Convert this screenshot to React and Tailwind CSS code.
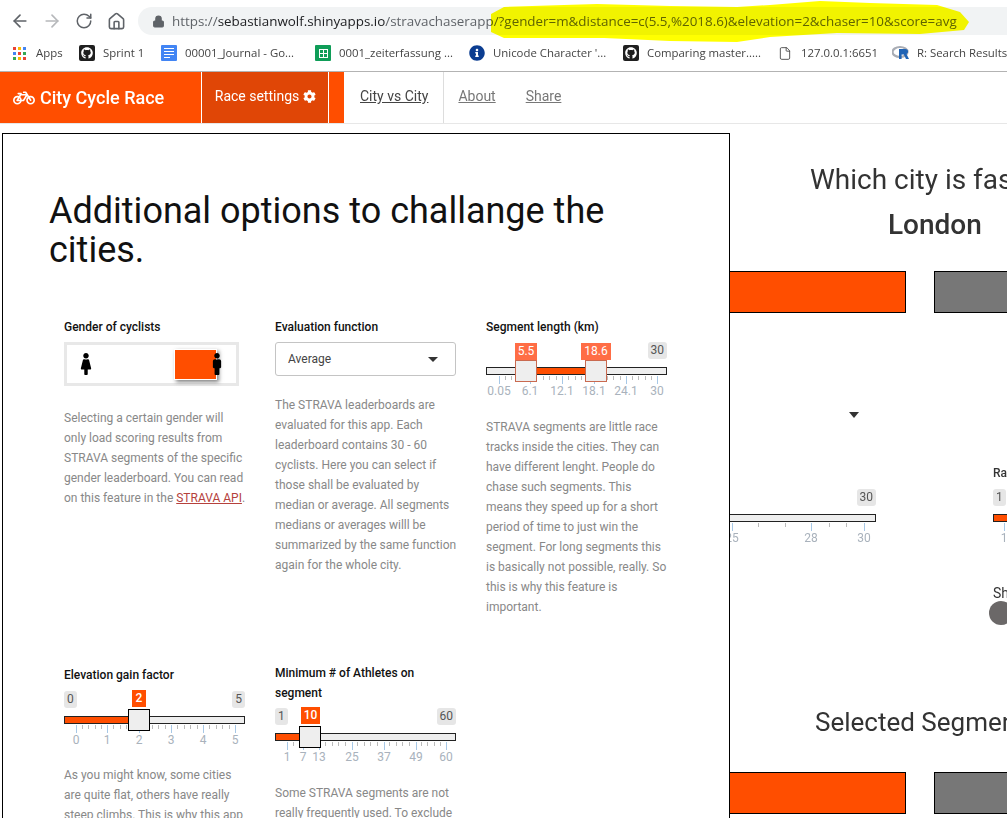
import React from 'react';
import { ArrowLeft, ArrowRight, RotateCw, Home, Lock, File } from 'lucide-react';
import { FaBicycle, FaCog, FaFemale, FaMale, FaInfoCircle, FaGithub } from 'react-icons/fa';

const ORANGE = 'bg-[#ff4e00]';

const minorsFrom = (majors) => {
  const out = [];
  for (let i = 0; i < majors.length - 1; i++) {
    for (let j = 1; j < 5; j++) out.push(majors[i] + ((majors[i + 1] - majors[i]) * j) / 5);
  }
  return out;
};

const GithubSquare = () => (
  <span className="flex h-4 w-4 items-center justify-center rounded-[2px] bg-[#1f1f1f]">
    <FaGithub className="h-3 w-3 text-white" />
  </span>
);

const AppsIcon = () => {
  const colors = ['bg-[#ea4335]', 'bg-[#fbbc04]', 'bg-[#4285f4]', 'bg-[#4285f4]', 'bg-[#ea4335]', 'bg-[#34a853]', 'bg-[#34a853]', 'bg-[#fbbc04]', 'bg-[#ea4335]'];
  return (
    <span className="grid h-[13px] w-[13px] grid-cols-3 gap-[2px]">
      {colors.map((c, i) => (
        <span key={i} className={c} />
      ))}
    </span>
  );
};

const DocIcon = () => (
  <span className="flex h-4 w-4 flex-col justify-center gap-[2px] rounded-[1px] bg-[#4285f4] px-[3px]">
    <span className="h-px bg-white" />
    <span className="h-px bg-white" />
    <span className="h-px bg-white" />
    <span className="h-px w-[6px] bg-white" />
  </span>
);

const SheetIcon = () => (
  <span className="flex h-4 w-4 items-center justify-center rounded-[1px] bg-[#0f9d58]">
    <span className="grid h-[9px] w-[9px] grid-cols-2 gap-px border border-white bg-white">
      <span className="bg-[#0f9d58]" />
      <span className="bg-[#0f9d58]" />
      <span className="bg-[#0f9d58]" />
      <span className="bg-[#0f9d58]" />
    </span>
  </span>
);

const RIcon = () => (
  <svg viewBox="0 0 18 16" className="h-4 w-[18px]">
    <ellipse cx="8" cy="7" rx="7.5" ry="5" fill="none" stroke="#a9adb5" strokeWidth="2.2" />
    <path d="M7 4h6.5a2.6 2.6 0 0 1 1 5l2.5 5h-3l-2.2-4.6H9.6V14H7z" fill="#1f63b5" />
  </svg>
);

const bookmarks = [
  { icon: <AppsIcon />, label: 'Apps', iconW: 'w-[13px]', gap: 'ml-[10px]', w: 'w-[66px]' },
  { icon: <GithubSquare />, label: 'Sprint 1', iconW: 'w-4', gap: 'ml-2', w: 'w-[82px]' },
  { icon: <DocIcon />, label: '00001_Journal - Go...', iconW: 'w-4', gap: 'ml-2', w: 'w-[154px]' },
  { icon: <SheetIcon />, label: '0001_zeiterfassung ...', iconW: 'w-4', gap: 'ml-2', w: 'w-[154px]' },
  { icon: <FaInfoCircle className="h-4 w-4 text-[#0b3d91]" />, label: "Unicode Character '...", iconW: 'w-4', gap: 'ml-2', w: 'w-[154px]' },
  { icon: <GithubSquare />, label: 'Comparing master.....', iconW: 'w-4', gap: 'ml-2', w: 'w-[155px]' },
  { icon: <File className="h-[17px] w-[14px] text-[#444]" strokeWidth={1.5} />, label: '127.0.0.1:6651', iconW: 'w-[14px]', gap: 'ml-[9px]', w: 'w-[114px]' },
  { icon: <RIcon />, label: 'R: Search Results', iconW: 'w-[18px]', gap: 'ml-[7px]', w: 'w-[130px]' },
];

const BrowserChrome = () => (
  <div className="font-['Open_Sans',sans-serif]">
    <div className="relative flex h-9 items-center bg-white">
      <div className="mt-[6px] flex w-[138px] items-center pl-[10px] text-[#5f6368]">
        <ArrowLeft className="h-5 w-5" strokeWidth={2} />
        <ArrowRight className="ml-[12px] h-5 w-5 text-[#b6b8bb]" strokeWidth={2} />
        <RotateCw className="ml-[13px] h-[18px] w-[18px]" strokeWidth={2} />
        <Home className="ml-[14px] h-[19px] w-[19px]" strokeWidth={2} />
      </div>
      <div className="mt-[6px] flex h-7 flex-1 items-center rounded-l-full bg-[#f1f3f4] pl-[14px] text-[13.4px] whitespace-nowrap">
        <Lock className="h-[13px] w-[13px] text-[#5f6368]" fill="#5f6368" />
        <span className="ml-[7px] text-[#5f6368]">
          https://<span className="text-[#202124]">sebastianwolf.shinyapps.io</span>/stravachaserapp/?gender=m&amp;distance=c(5.5,%2018.6)&amp;elevation=2&amp;chaser=10&amp;score=avg
        </span>
      </div>
      <svg viewBox="0 0 1007 44" className="absolute top-0 left-0 h-11 w-[1007px] mix-blend-multiply">
        <polygon
          fill="#ffff00"
          points="491,14 504,7 564,5 597,4 670,6 737,7 770,5 820,1 870,3 937,5 960,12 969,22 964,30 920,34 837,33 770,37 737,42 670,41 604,38 537,38 504,38 491,32"
        />
      </svg>
    </div>
    <div className="flex h-9 items-center overflow-hidden border-b border-[#b3b3b3] pl-[13px] text-[11.4px] text-[#444] whitespace-nowrap">
      {bookmarks.map((b) => (
        <div key={b.label} className={`flex shrink-0 items-center ${b.w}`}>
          <span className={`flex shrink-0 items-center justify-center ${b.iconW}`}>{b.icon}</span>
          <span className={`mb-[2px] ${b.gap}`}>{b.label}</span>
        </div>
      ))}
    </div>
  </div>
);

const NavBar = () => (
  <div className="flex h-[52px] border-b border-[#e7e7e7] bg-white">
    <div className={`flex h-[51px] w-[344px] text-white ${ORANGE}`}>
      <div className="flex w-[201px] items-center pl-[13px]">
        <FaBicycle className="h-[22px] w-[22px]" />
        <span className="ml-[5px] text-[18px] font-medium">City Cycle Race</span>
      </div>
      <div className="flex w-[128px] items-center justify-center border-x border-white bg-[#e04606] pb-[2px] pl-[1px] text-[14px]">
        Race settings
        <FaCog className="ml-1 h-[13px] w-[13px]" />
      </div>
    </div>
    <div className="flex h-[51px] items-center border-r border-[#ddd] pr-[15px] pb-[2px] pl-4 text-[14px] text-[#444] underline">City vs City</div>
    <div className="flex h-[51px] items-center pr-[17px] pb-[2px] pl-[14px] text-[14px] text-[#777] underline">About</div>
    <div className="ml-[-3px] flex h-[51px] items-center px-4 pb-[2px] text-[14px] text-[#777] underline">Share</div>
  </div>
);

const Slider = ({ min, max, bubbles = [], fill, handles = [], handleBorder = 'border-black', majors, labels, minors, bubbleTop = 'top-[-27px]', width = 'w-[181px]' }) => (
  <div className={`shrink-0 ${width}`}>
    <div className="flex h-[25px] items-start justify-between text-[12px] leading-[17px]">
      {min ? <span className="rounded-[3px] bg-[#e6e6e6] px-[3px] text-[#555]">{min}</span> : <span />}
      {max ? <span className="rounded-[3px] bg-[#e6e6e6] px-[3px] text-[#555]">{max}</span> : <span />}
    </div>
    <div className="relative h-2 border border-[#222] bg-[#eee]">
      {fill && <div className={`absolute top-0 bottom-0 ${ORANGE}`} style={{ left: fill[0], width: fill[1] - fill[0] }} />}
      {bubbles.map((b) => (
        <div
          key={b.text}
          className={`absolute z-10 h-[17px] text-center text-[12px] leading-[17px] text-white ${bubbleTop} ${b.color}`}
          style={{ left: b.left - 1, width: b.width }}
        >
          {b.text}
        </div>
      ))}
      {handles.map((h) => (
        <div key={h} className={`absolute top-[-8px] z-10 h-[22px] w-[22px] border bg-[#eee] ${handleBorder}`} style={{ left: h - 1 }} />
      ))}
    </div>
    <div className="relative h-6">
      {minors.map((m) => (
        <span key={m} className="absolute top-[1px] h-1 w-px bg-[#bbb]" style={{ left: m }} />
      ))}
      {majors.map((m, i) => (
        <React.Fragment key={m}>
          <span className="absolute top-[1px] h-2 w-px bg-[#a7c8e6]" style={{ left: m }} />
          <span className="absolute top-[9px] -translate-x-1/2 text-[12px] leading-[14px] text-[#a9b2bc]" style={{ left: m }}>
            {labels[i]}
          </span>
        </React.Fragment>
      ))}
    </div>
  </div>
);

const Heading = ({ children, className = '' }) => <h4 className={`text-[12px] leading-5 font-medium text-[#111] ${className}`}>{children}</h4>;
const Help = ({ children, className = '' }) => <p className={`w-[184px] text-[12px] leading-5 text-[#888] ${className}`}>{children}</p>;

const majorsStd = [12, 43, 75, 107, 139, 171];

const SettingsModal = () => (
  <div className="absolute top-[9px] left-[2px] z-20 h-[800px] w-[728px] border border-black bg-white pt-[58px] pl-[46px]">
    <h1 className="w-[600px] text-[36px] leading-[39px] text-[#111]">Additional options to challange the cities.</h1>

    <div className="mt-[47px] ml-[15px] grid w-[603px] grid-cols-[181px_181px_181px] gap-x-[30px] gap-y-[46px]">
      <div>
        <Heading className="mb-[5px]">Gender of cyclists</Heading>
        <div className="relative flex h-[44px] w-[175px] items-center justify-between border-[3px] border-[#e8e8e8] bg-white pr-[8px] pl-[8px]">
          <FaFemale className="h-[22px] w-[22px] text-black" />
          <div className={`absolute top-[4px] left-[107px] h-[31px] w-[43px] border border-white shadow-[2px_2px_4px_rgba(0,0,0,0.5)] ${ORANGE}`} />
          <FaMale className="relative z-10 h-[22px] w-[22px] text-black" />
        </div>
        <Help className="mt-[22px]">
          Selecting a certain gender will only load scoring results from STRAVA segments of the specific gender leaderboard. You can read on this feature in the{' '}
          <span className="text-[#b5413c] underline">STRAVA API</span>.
        </Help>
      </div>

      <div>
        <Heading className="mb-[5px]">Evaluation function</Heading>
        <div className="flex h-[34px] items-center justify-between rounded-[3px] border border-[#c4c4c4] pr-[17px] pl-[12px] text-[12px] text-[#444]">
          Average
          <span className="h-0 w-0 border-x-[5px] border-t-[5px] border-x-transparent border-t-[#333]" />
        </div>
        <Help className="mt-[19px]">
          The STRAVA leaderboards are evaluated for this app. Each leaderboard contains 30 - 60 cyclists. Here you can select if those shall be evaluated by median or average. All segments medians or averages willl be summarized by the same function again for the whole city.
        </Help>
      </div>

      <div>
        <Heading className="mb-[5px]">Segment length (km)</Heading>
        <Slider
          max="30"
          bubbleTop="top-[-25px]"
          handleBorder="border-[#c96a50]"
          fill={[40, 99]}
          handles={[29, 99]}
          bubbles={[
            { text: '5.5', left: 29, width: 22, color: 'bg-[#ff6d45]' },
            { text: '18.6', left: 95, width: 30, color: 'bg-[#ff6d45]' },
          ]}
          majors={[13, 44, 76, 108, 140, 171]}
          labels={['0.05', '6.1', '12.1', '18.1', '24.1', '30']}
          minors={minorsFrom([13, 44, 76, 108, 140, 171])}
        />
        <Help className="mt-[18px]">
          STRAVA segments are little race tracks inside the cities. They can have different lenght. People do chase such segments. This means they speed up for a short period of time to just win the segment. For long segments this is basically not possible, really. So this is why this feature is important.
        </Help>
      </div>

      <div className="pt-[2px]">
        <Heading className="mb-[6px]">Elevation gain factor</Heading>
        <Slider
          min="0"
          max="5"
          fill={[0, 70]}
          handles={[64]}
          bubbles={[{ text: '2', left: 68, width: 14, color: `font-medium ${ORANGE}` }]}
          majors={majorsStd}
          labels={['0', '1', '2', '3', '4', '5']}
          minors={minorsFrom(majorsStd)}
        />
        <Help className="mt-[17px]">As you might know, some cities are quite flat, others have really steep climbs. This is why this app</Help>
      </div>

      <div>
        <Heading className="mb-[5px]">Minimum # of Athletes on segment</Heading>
        <Slider
          min="1"
          max="60"
          fill={[0, 30]}
          handles={[24]}
          bubbles={[{ text: '10', left: 26, width: 19, color: `font-medium ${ORANGE}` }]}
          majors={[12, 28, 44, 77, 109, 141, 171]}
          labels={['1', '7', '13', '25', '37', '49', '60']}
          minors={minorsFrom([12, 44, 76, 108, 140, 171])}
        />
        <Help className="mt-[18px]">Some STRAVA segments are not really frequently used. To exclude</Help>
      </div>
    </div>
  </div>
);

const BarRow = ({ className = '' }) => (
  <div className={`flex gap-[28px] pl-[650px] ${className}`}>
    <div className={`h-[42px] w-[256px] border border-black ${ORANGE}`} />
    <div className="h-[42px] w-[256px] border border-black bg-[#777]" />
  </div>
);

const Background = () => (
  <div className="w-[1400px] pt-[36px] text-[#333]">
    <h2 className="pl-[810px] text-[28px] leading-10 whitespace-nowrap">Which city is faster?</h2>
    <h3 className="mt-[5px] pl-[888px] text-[28px] leading-10 font-medium">London</h3>
    <BarRow className="mt-[26px]" />
    <div className="mt-[99px] flex h-[6px] w-[859px] justify-end">
      <span className="h-0 w-0 border-x-[5px] border-t-[6px] border-x-transparent border-t-[#333]" />
    </div>
    <div className="mt-[45px] flex items-start gap-[117px] pl-[695px]">
      <div className="pt-[26px]">
        <Slider
          max="30"
          majors={[37, 116, 169]}
          labels={['25', '28', '30']}
          minors={[63, 90, 134, 151]}
        />
      </div>
      <div>
        <div className="mb-[6px] text-[12px] leading-5 font-medium">Race length</div>
        <Slider min="1" max="10" fill={[0, 60]} majors={[11]} labels={['1']} minors={[]} />
        <div className="mt-[39px] text-[14px] leading-4">Show all</div>
        <div className="ml-[-4px] h-6 w-6 rounded-full bg-[#6b6868]" />
      </div>
    </div>
    <h2 className="mt-[77px] pl-[815px] text-[26px] leading-10 whitespace-nowrap">Selected Segments</h2>
    <BarRow className="mt-[30px]" />
  </div>
);

export default function App() {
  return (
    <div className="h-[818px] w-[1007px] overflow-hidden bg-white font-['Roboto',sans-serif]">
      <BrowserChrome />
      <NavBar />
      <div className="relative h-[694px] overflow-hidden">
        <Background />
        <SettingsModal />
      </div>
    </div>
  );
}
